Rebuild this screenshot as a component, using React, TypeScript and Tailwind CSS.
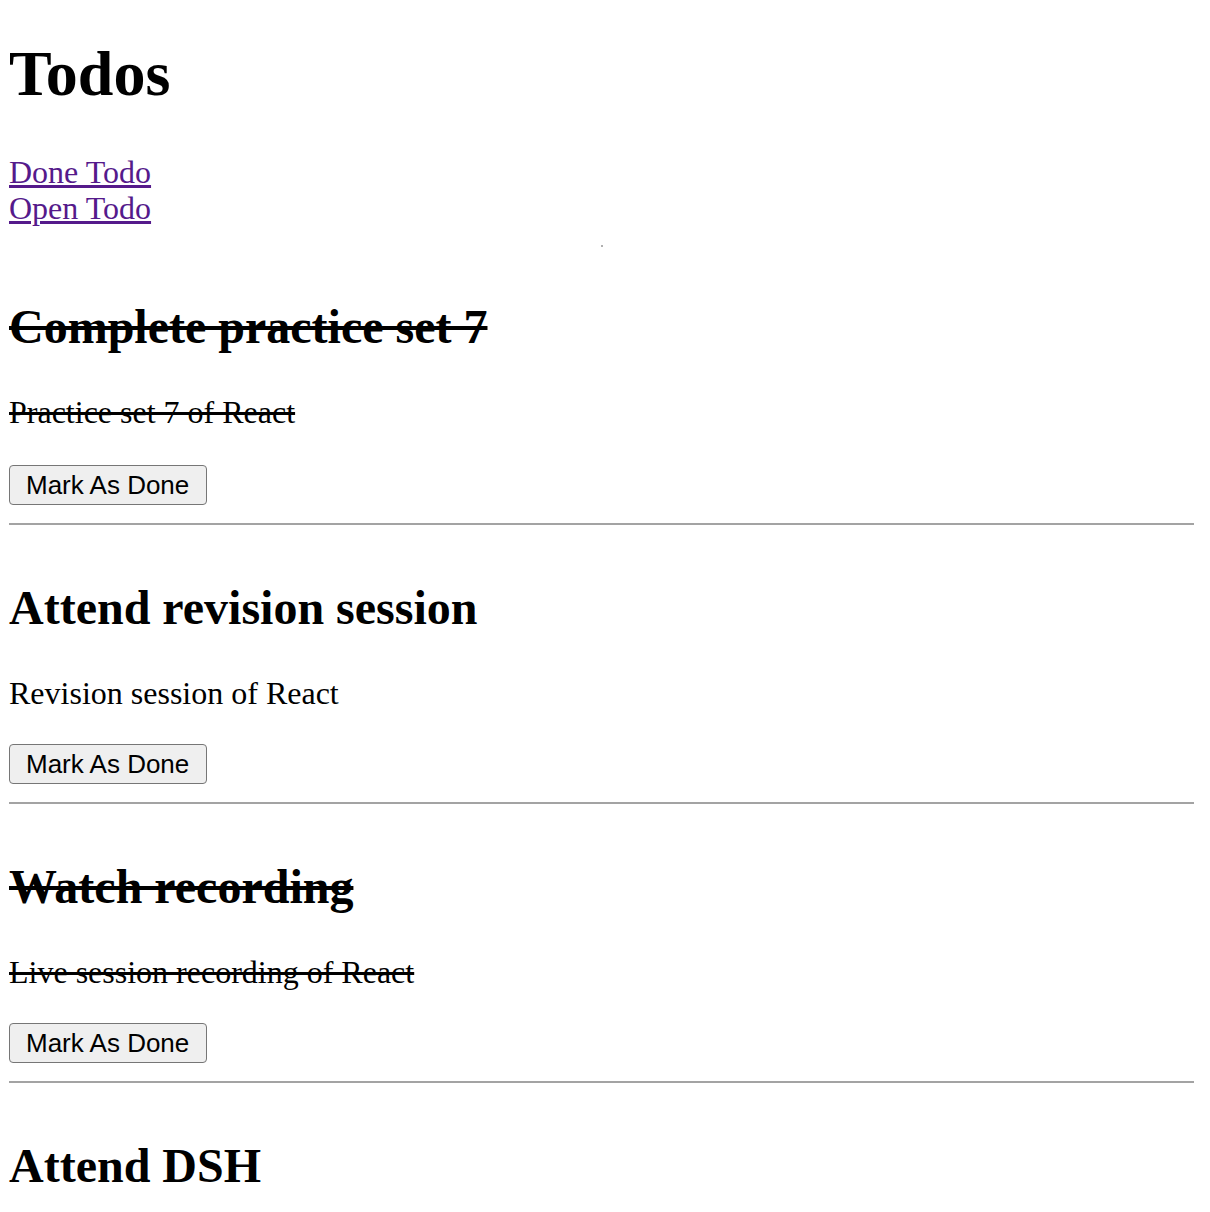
import React from "react";

type Todo = { title: string; desc: string; done: boolean };

const todos: Todo[] = [
  { title: "Complete practice set 7", desc: "Practice set 7 of React", done: true },
  { title: "Attend revision session", desc: "Revision session of React", done: false },
  { title: "Watch recording", desc: "Live session recording of React", done: true },
  { title: "Attend DSH", desc: "Doubt solving hour of React", done: false },
];

export default function App() {
  return (
    <div
      className="bg-white text-black pl-[9px] pr-[16px] pb-[40px]"
      style={{ fontFamily: '"Liberation Serif", "Times New Roman", serif' }}
    >
      <h1 className="mt-[38px] text-[64px] leading-[72px] font-bold">Todos</h1>
      <div className="mt-[44px] text-[32px] leading-[36px]">
        <div>
          <a href="#done" className="text-[#551a8b] underline">
            Done Todo
          </a>
        </div>
        <div>
          <a href="#open" className="text-[#551a8b] underline">
            Open Todo
          </a>
        </div>
      </div>
      <div className="flex justify-center h-[0px]">
        <div className="mt-[19px] w-[2px] h-[2px] bg-[#b0b0b0]" />
      </div>
      <ul>
        {todos.map((t, i) => (
          <li key={i}>
            <h2
              className={`text-[48px] leading-[54px] font-bold ${i === 0 ? "mt-[74px]" : "mt-[56px]"} ${t.done ? "line-through" : ""}`}
            >
              {t.title}
            </h2>
            <p className={`mt-[40px] text-[32px] leading-[36px] ${t.done ? "line-through" : ""}`}>
              {t.desc}
            </p>
            <button
              className={`${i === 0 ? "mt-[35px]" : "mt-[33px]"} h-[40px] pl-[16px] pr-[17px] flex items-center border border-[#767676] rounded-[4px] bg-[#efefef] text-[26px] text-black`}
              style={{ fontFamily: '"Liberation Sans", Arial, sans-serif' }}
            >
              Mark As Done
            </button>
            <hr className="mt-[18px] border-0 h-[2px] bg-[#a3a3a3]" />
          </li>
        ))}
      </ul>
    </div>
  );
}
